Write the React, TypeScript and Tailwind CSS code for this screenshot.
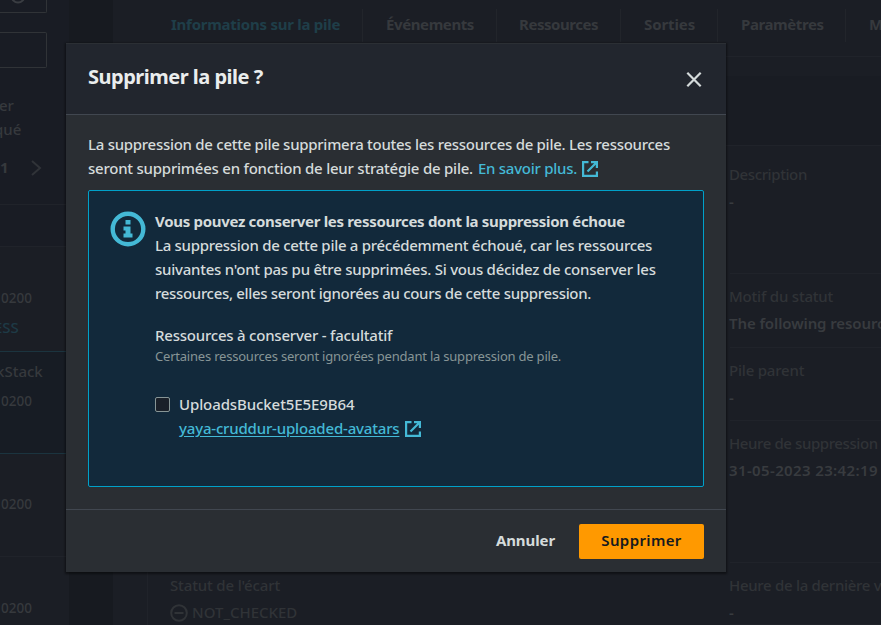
import type { ReactNode } from 'react';

function ExternalIcon() {
  return (
    <svg viewBox="0 0 16 16" className="mt-[2px] h-4 w-4 shrink-0" fill="none" stroke="#44b9d6" strokeWidth="2.2">
      <path d="M6.500 1.100H1.100v13.800h13.800V10.500" />
      <path d="M9 1.100h5.900V7M14.500 1.500 5.500 10.500" />
    </svg>
  );
}

function InfoIcon() {
  return (
    <svg viewBox="0 0 36 36" className="h-9 w-9 shrink-0" fill="none">
      <circle cx="18" cy="18" r="15.300" stroke="#44b9d6" strokeWidth="4.400" />
      <path fill="#44b9d6" d="M15.500 9h5v4.500h-5zM13.500 15.500h7v7H22.500v4h-9v-4h2v-3h-2z" />
    </svg>
  );
}

function Sidebar() {
  return (
    <aside className="flex w-[69px] shrink-0 flex-col bg-[#191c24] text-[#36393d]">
      <div className="flex h-[13px] w-[47px] items-end justify-end overflow-hidden rounded-br-[2px] border-r border-b border-[#303337] pr-5">
        <svg viewBox="0 0 16 16" className="mb-2 h-4 w-4 shrink-0" fill="none" stroke="#3a3d42" strokeWidth="2">
          <circle cx="8" cy="8" r="6.500" />
        </svg>
      </div>
      <div className="mt-[19px] h-9 w-[47px] rounded-r-[2px] border-y border-r border-[#303337]" />
      <div className="mt-[25px] -ml-px h-6 leading-6">er</div>
      <div className="-ml-[6px] h-6 leading-6">qué</div>
      <div className="mt-[14px] flex h-6 items-center font-bold leading-6">
        <span className="w-[30px]">1</span>
        <svg viewBox="0 0 12 18" className="mt-[2px] h-[18px] w-3" fill="none" stroke="#303338" strokeWidth="2">
          <path d="m2 2 8 7-8 7" />
        </svg>
      </div>
      <div className="mt-[25px] h-[43px] border-y border-[#20232a]" />
      <div className="h-[104px] bg-[#1b1e25] pt-[39px]">
        <div className="h-6 pl-px text-[13.5px] leading-6">0200</div>
        <div className="-ml-[6px] mt-[5px] h-6 leading-6 text-[#1e3a46]">ESS</div>
      </div>
      <div className="h-[103px] border-y border-[#1b343f] bg-[#171c24] pt-[7px]">
        <div className="-ml-1 h-6 leading-6">kStack</div>
        <div className="mt-[6px] h-6 pl-px text-[13.5px] leading-6">0200</div>
      </div>
      <div className="h-[103px] border-b border-[#20232a] bg-[#1b1e25] pt-[38px]">
        <div className="h-6 pl-px text-[13.5px] leading-6">0200</div>
      </div>
      <div className="flex-1 bg-[#1b1e25] pt-[39px]">
        <div className="h-6 pl-px text-[13.5px] leading-6">0200</div>
      </div>
    </aside>
  );
}

const tabs = [
  { label: 'Informations sur la pile', box: 'w-[216px] pl-[24px] text-[#1f3e49] tracking-[-0.25px]' },
  { label: 'Événements', box: 'w-[134px] pl-[23px] tracking-[-0.4px]' },
  { label: 'Ressources', box: 'w-[124px] pl-[22px] tracking-[-0.45px]' },
  { label: 'Sorties', box: 'w-[97px] pl-[23px] tracking-[-0.1px]' },
  { label: 'Paramètres', box: 'w-[128px] pl-[23px] tracking-[-0.4px]' },
];

function Field({ label, value, box, labelClass }: { label: string; value: ReactNode; box: string; labelClass: string }) {
  return (
    <div className={`shrink-0 border-b border-[#20232a] ${box}`}>
      <div className={`-ml-px h-6 whitespace-nowrap leading-6 text-[#303337] ${labelClass}`}>{label}</div>
      <div className="-ml-px mt-[3px] h-6 whitespace-nowrap font-semibold leading-6 text-[#383b3f]">{value}</div>
    </div>
  );
}

function StackPage() {
  return (
    <div className="flex h-full">
      <Sidebar />
      <div className="w-11 shrink-0 bg-[#171a20]" />
      <main className="flex min-w-0 flex-1 flex-col overflow-hidden bg-[#1b1e25]">
        <nav className="ml-[34px] flex h-[57px] shrink-0 border-b border-[#20232a] pt-[9px] font-bold text-[#36393d]">
          {tabs.map((t) => (
            <div key={t.label} className={`h-[33px] shrink-0 whitespace-nowrap border-r border-[#22252b] pt-[3px] leading-6 ${t.box}`}>
              {t.label}
            </div>
          ))}
          <div className="shrink-0 pt-[3px] pl-[23px] leading-6">M</div>
        </nav>
        <div className="mt-[19px] ml-[34px] h-[70px] shrink-0 border-b border-[#20232a] bg-[#191c23]" />
        <div className="ml-[34px] flex min-h-0 flex-1 border-l border-[#20232a]">
          <div className="flex w-[581px] shrink-0 flex-col justify-end pb-px pl-[22px] text-[#303337]">
            <div className="h-6 leading-6 tracking-[-0.15px]">Statut de l'écart</div>
            <div className="mt-[3px] flex h-6 items-center gap-1 leading-6">
              <svg viewBox="0 0 18 18" className="mt-px h-[18px] w-[18px]" fill="none" stroke="#303337" strokeWidth="2">
                <circle cx="9" cy="9" r="7.800" />
                <path d="M4.500 9h9" />
              </svg>
              <span>NOT_CHECKED</span>
            </div>
          </div>
          <div className="flex min-w-0 flex-1 flex-col pl-px">
            <Field label="Description" value="-" box="h-[128px] pt-4" labelClass="tracking-[-0.4px]" />
            <Field label="Motif du statut" value={<span className="tracking-[-0.1px]">The following resource(s)</span>} box="h-[74px] pt-[10px]" labelClass="tracking-[-0.2px]" />
            <Field label="Pile parent" value="-" box="h-[73px] pt-[10px]" labelClass="tracking-[-0.2px]" />
            <Field label="Heure de suppression" value={<span className="tracking-[0.37px]">31-05-2023 23:42:19</span>} box="h-[142px] pt-[10px]" labelClass="tracking-[-0.4px]" />
            <Field label="Heure de la dernière vérification" value="-" box="h-[62px] pt-[10px]" labelClass="tracking-[-0.3px]" />
          </div>
        </div>
      </main>
    </div>
  );
}

function DeleteDialog() {
  return (
    <div
      role="dialog"
      className="absolute top-[43px] left-[66px] flex h-[529px] w-[660px] flex-col bg-[#2a2e33] text-[#d5dbdb] shadow-[0_1px_2px_1px_rgba(0,0,0,0.45)]"
    >
      <header className="flex h-[72px] shrink-0 items-start justify-between border-t border-b border-t-[#2b2f34] border-b-[#414750] bg-[#22262e] pr-6 pl-[22px]">
        <h2 className="mt-[21px] text-[20px] font-bold leading-6 tracking-[-0.5px] text-[#eaeded]">Supprimer la pile ?</h2>
        <svg viewBox="0 0 16 16" className="mt-[27px] h-4 w-4" fill="none" stroke="#d5dbdb" strokeWidth="2.200">
          <path d="m1.300 1.800 13.400 13.400M14.700 1.800 1.300 15.200" />
        </svg>
      </header>
      <div className="h-[395px] shrink-0 border-b border-[#414750] px-[22px] pt-[17px]">
        <p className="h-6 whitespace-nowrap leading-6 tracking-[-0.28px]">
          La suppression de cette pile supprimera toutes les ressources de pile. Les ressources
        </p>
        <p className="flex h-6 items-center whitespace-nowrap leading-6">
          <span className="w-[390px] tracking-[-0.23px]">seront supprimées en fonction de leur stratégie de pile.</span>
          <a className="w-[104px] tracking-[-0.27px] text-[#44b9d6]">En savoir plus.</a>
          <ExternalIcon />
        </p>
        <section className="mt-[10px] flex h-[297px] gap-2 rounded-[2px] border border-[#00a1c9] bg-[#12293b] pt-[18px] pl-[22px]">
          <div className="mt-[2px] -ml-px mr-px">
            <InfoIcon />
          </div>
          <div className="whitespace-nowrap">
            <div className="h-6 font-bold leading-6 tracking-[-0.31px]">Vous pouvez conserver les ressources dont la suppression échoue</div>
            <div className="h-6 leading-6 tracking-[-0.29px]">La suppression de cette pile a précédemment échoué, car les ressources</div>
            <div className="h-6 leading-6 tracking-[-0.24px]">suivantes n'ont pas pu être supprimées. Si vous décidez de conserver les</div>
            <div className="h-6 leading-6 tracking-[-0.32px]">ressources, elles seront ignorées au cours de cette suppression.</div>
            <div className="mt-[18px] h-6 leading-6 tracking-[-0.22px]">Ressources à conserver - facultatif</div>
            <div className="-mt-px h-5 text-[13px] font-normal leading-5 tracking-[-0.21px] text-[#879596]">
              Certaines ressources seront ignorées pendant la suppression de pile.
            </div>
            <div className="mt-[26px] flex gap-[9px]">
              <div className="mt-[5px] h-[15px] w-[15px] rounded-[2px] border border-[#879596] bg-[#1a2029]" />
              <div>
                <div className="h-6 leading-6 tracking-[-0.1px]">UploadsBucket5E5E9B64</div>
                <div className="flex h-6 items-center leading-6">
                  <a className="w-[226px] tracking-[-0.18px] text-[#44b9d6] underline decoration-1 underline-offset-2">
                    yaya-cruddur-uploaded-avatars
                  </a>
                  <ExternalIcon />
                </div>
              </div>
            </div>
          </div>
        </section>
      </div>
      <footer className="flex flex-1 items-start justify-end pt-[14px] pr-[22px] font-bold">
        <button className="mr-[24px] h-[35px] pb-[2px] leading-[33px] tracking-[-0.1px]">Annuler</button>
        <button className="h-[35px] w-[125px] rounded-[2px] bg-[#ff9900] pb-[2px] leading-[33px] tracking-[0.37px] text-[#16191f]">
          <span className="font-semibold">Supprimer</span>
        </button>
      </footer>
    </div>
  );
}

export default function App() {
  return (
    <div className="relative h-[625px] w-[881px] overflow-hidden bg-[#1b1e25] font-['Noto_Sans','Open_Sans',sans-serif] text-[15px] font-medium">
      <StackPage />
      <DeleteDialog />
    </div>
  );
}
